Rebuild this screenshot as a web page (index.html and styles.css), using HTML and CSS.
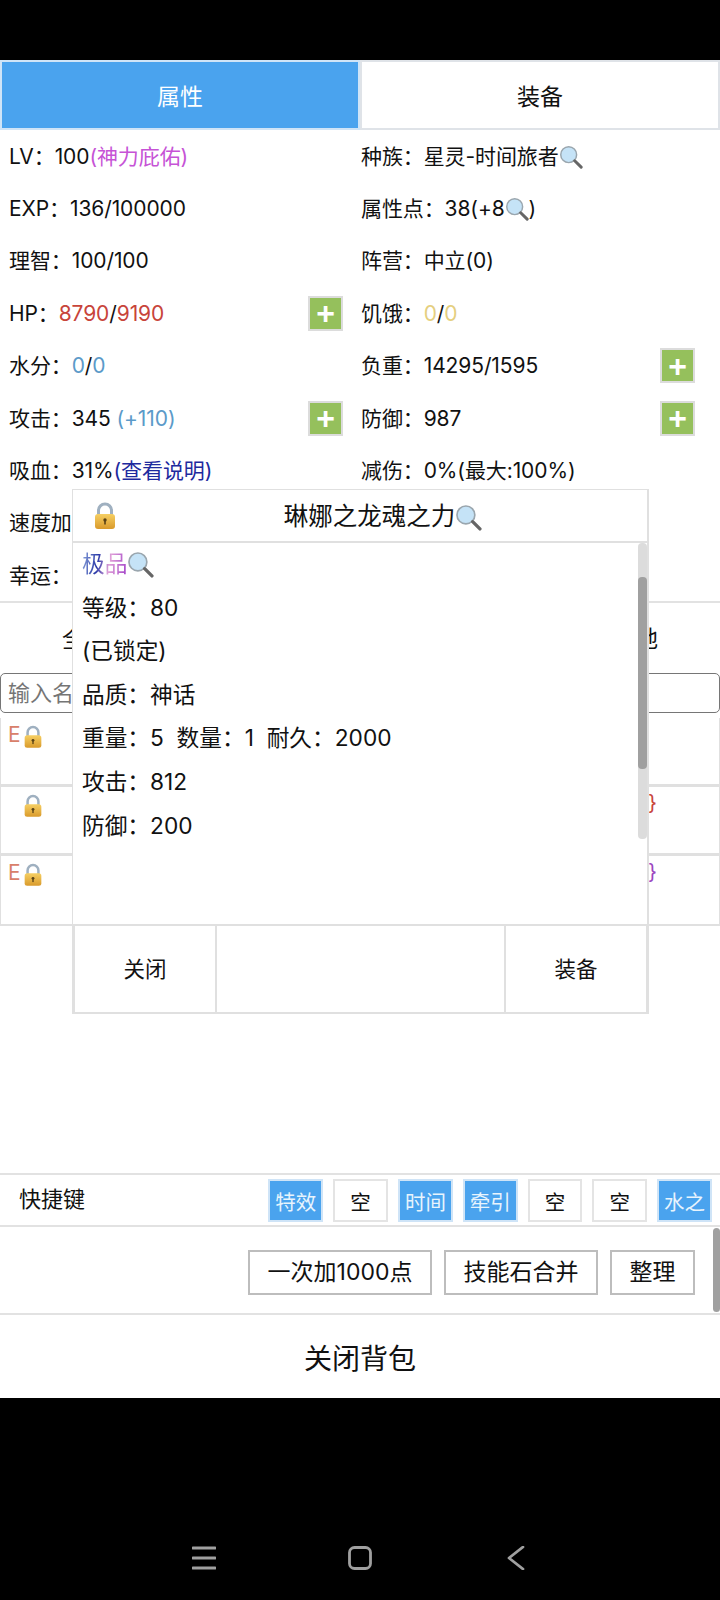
FILE: index.html
```html
<!DOCTYPE html>
<html lang="zh-CN">
<head>
    <meta charset="UTF-8">
    <meta name="viewport" content="width=device-width, initial-scale=1.0">
    <title>背包</title>
    <link rel="stylesheet" href="styles.css">
</head>
<body>

<svg class="defs" width="0" height="0" aria-hidden="true">
    <defs>
        <linearGradient id="gold" x1="0" y1="0" x2="0" y2="1">
            <stop offset="0" stop-color="#f6cf63"/>
            <stop offset="1" stop-color="#d99a2b"/>
        </linearGradient>
        <symbol id="lock" viewBox="0 0 24 28">
            <path d="M5.5 13V8.5a6.5 6.5 0 0 1 13 0V13" fill="none" stroke="#9fb0c0" stroke-width="3"/>
            <rect x="2" y="12" width="20" height="15" rx="3" fill="url(#gold)"/>
            <circle cx="12" cy="18" r="1.7" fill="#5b4316"/>
            <rect x="11.2" y="18" width="1.6" height="4.5" fill="#5b4316"/>
        </symbol>
        <symbol id="glass" viewBox="0 0 26 26">
            <circle cx="10.5" cy="10.5" r="8.6" fill="#c5e3f7" stroke="#9aa6ae" stroke-width="1.6"/>
            <path d="M17 17l7 7" stroke="#666" stroke-width="3.2" stroke-linecap="round"/>
        </symbol>
    </defs>
</svg>

<div class="page">
    <div class="top-bar"></div>

    <main class="panel">
        <div class="tabs">
            <div class="tab tab-active">属性</div>
            <div class="tab">装备</div>
        </div>

        <div class="stats">
            <div class="stat"><span>LV：100<span class="purple">(神力庇佑)</span></span></div>
            <div class="stat stat-right"><span>种族：星灵-时间旅者<svg class="icon-glass"><use href="#glass"/></svg></span></div>
            <div class="stat"><span>EXP：136/100000</span></div>
            <div class="stat stat-right"><span>属性点：38(+8<svg class="icon-glass"><use href="#glass"/></svg>)</span></div>
            <div class="stat"><span>理智：100/100</span></div>
            <div class="stat stat-right"><span>阵营：中立(0)</span></div>
            <div class="stat"><span>HP：<span class="red">8790</span>/<span class="red">9190</span></span><button class="plus">+</button></div>
            <div class="stat stat-right"><span>饥饿：<span class="yellow">0</span>/<span class="yellow">0</span></span></div>
            <div class="stat"><span>水分：<span class="steel">0</span>/<span class="steel">0</span></span></div>
            <div class="stat stat-right"><span>负重：14295/1595</span><button class="plus">+</button></div>
            <div class="stat"><span>攻击：345 <span class="steel">(+110)</span></span><button class="plus">+</button></div>
            <div class="stat stat-right"><span>防御：987</span><button class="plus">+</button></div>
            <div class="stat"><span>吸血：31%<span class="navy">(查看说明)</span></span></div>
            <div class="stat stat-right"><span>减伤：0%(最大:100%)</span></div>
            <div class="stat"><span>速度加成：0</span></div>
            <div class="stat stat-right"></div>
            <div class="stat"><span>幸运：0</span></div>
            <div class="stat stat-right"></div>
        </div>

        <div class="filters">
            <div class="filter">全部</div>
            <div class="filter">武器</div>
            <div class="filter">防具</div>
            <div class="filter">土地</div>
        </div>

        <input class="search" type="text" placeholder="输入名称搜索">

        <div class="items">
            <div class="item"><span class="grade">E</span><svg class="icon-lock"><use href="#lock"/></svg></div>
            <div class="item"><span class="grade"></span><svg class="icon-lock"><use href="#lock"/></svg><span class="item-name red">{+5}</span></div>
            <div class="item"><span class="grade">E</span><svg class="icon-lock"><use href="#lock"/></svg><span class="item-name violet">{+12}</span></div>
        </div>

        <div class="spacer"></div>

        <div class="shortcuts">
            <div class="shortcuts-label">快捷键</div>
            <div class="slot slot-on">特效</div>
            <div class="slot">空</div>
            <div class="slot slot-on">时间</div>
            <div class="slot slot-on">牵引</div>
            <div class="slot">空</div>
            <div class="slot">空</div>
            <div class="slot slot-on">水之</div>
        </div>

        <div class="actions">
            <button class="action">一次加1000点</button>
            <button class="action">技能石合并</button>
            <button class="action">整理</button>
            <div class="actions-thumb"></div>
        </div>

        <div class="close-bag">关闭背包</div>
    </main>

    <div class="modal">
        <div class="modal-head">
            <svg class="modal-lock"><use href="#lock"/></svg>
            <span>琳娜之龙魂之力<svg class="icon-glass icon-glass-lg"><use href="#glass"/></svg></span>
        </div>
        <div class="modal-body">
            <p><span class="rainbow">极品</span><svg class="icon-glass icon-glass-lg"><use href="#glass"/></svg></p>
            <p>等级：80</p>
            <p>(已锁定)</p>
            <p>品质：神话</p>
            <p>重量：5&nbsp;&nbsp;数量：1&nbsp;&nbsp;耐久：2000</p>
            <p>攻击：812</p>
            <p>防御：200</p>
            <div class="scroll-track"><div class="scroll-thumb"></div></div>
        </div>
        <div class="modal-foot">
            <div class="modal-btn modal-btn-side">关闭</div>
            <div class="modal-btn modal-btn-mid"></div>
            <div class="modal-btn modal-btn-side modal-btn-last">装备</div>
        </div>
    </div>

    <footer class="nav">
        <svg class="nav-icon" viewBox="0 0 24 24"><path d="M1 2h22M1 12h22M1 22h22" stroke="#a0a0a0" stroke-width="3" stroke-linecap="round" fill="none"/></svg>
        <svg class="nav-icon" viewBox="0 0 24 24"><rect x="1.5" y="1.5" width="21" height="21" rx="5" stroke="#a0a0a0" stroke-width="2.8" fill="none"/></svg>
        <svg class="nav-icon" viewBox="0 0 24 24"><path d="M19 1L5 12l14 11" stroke="#a0a0a0" stroke-width="2.8" stroke-linecap="round" stroke-linejoin="round" fill="none"/></svg>
    </footer>
</div>

</body>
</html>
```

FILE: styles.css
```css
* {
    box-sizing: border-box;
}
body {
    margin: 0;
    background-color: #000;
    font-family: Inter, "Noto Sans CJK SC", sans-serif;
    color: #111;
}
.defs {
    display: block;
    height: 0;
}
.page {
    position: relative;
    width: 720px;
    height: 1600px;
    display: flex;
    flex-direction: column;
    background-color: #000;
}
.top-bar {
    height: 60px;
}
.panel {
    height: 1338px;
    display: flex;
    flex-direction: column;
    background-color: #fff;
}

/* tabs */
.tabs {
    display: flex;
    height: 70px;
}
.tab {
    width: 50%;
    display: flex;
    align-items: center;
    justify-content: center;
    font-size: 23px;
    border: 2px solid #dfe3e8;
}
.tab-active {
    background-color: #4aa3ee;
    color: #fff;
    border-color: #cfe4f7;
}

/* stat grid */
.stats {
    display: grid;
    grid-template-columns: 1fr 1fr;
    grid-auto-rows: 52.4px;
    height: 473px;
    border-bottom: 2px solid #e2e2e2;
}
.stat {
    display: flex;
    align-items: center;
    justify-content: space-between;
    padding: 0 17px 0 9px;
    font-size: 21px;
    letter-spacing: -0.1px;
    white-space: nowrap;
}
.stat > span {
    margin-bottom: 3px;
}
.stat-right {
    padding: 0 25px 0 1px;
}
.plus {
    width: 35px;
    height: 35px;
    padding: 0;
    border: 2px solid #dcdcdc;
    background-color: #95c05c;
    color: #fff;
    font-family: "Liberation Sans", sans-serif;
    font-size: 32px;
    line-height: 30px;
    font-weight: bold;
}
.icon-glass {
    width: 24px;
    height: 24px;
    vertical-align: -5px;
}
.icon-glass-lg {
    width: 27px;
    height: 27px;
    vertical-align: -6px;
}
.purple { color: #c653d6; }
.red { color: #c8443a; }
.yellow { color: #e5cf7f; }
.steel { color: #5b9ac9; }
.navy { color: #1e2a9e; }
.violet { color: #9b45c0; }

/* filter row */
.filters {
    display: grid;
    grid-template-columns: repeat(4, 170px);
    justify-content: space-between;
    height: 70px;
    padding-bottom: 2px;
    align-items: center;
}
.filter {
    text-align: center;
    font-size: 23px;
}
.search {
    display: block;
    flex: none;
    width: 720px;
    height: 40px;
    padding: 0 7px;
    border: 1.5px solid #767676;
    border-radius: 5px;
    font-family: inherit;
    font-size: 22px;
}
.search::placeholder {
    color: #757575;
}

/* item list */
.items {
    margin-top: 5px;
    border: 1px solid #e0e0e0;
    border-top: none;
}
.item {
    display: flex;
    align-items: flex-start;
    height: 69px;
    padding: 4px 0 0 7px;
    border-bottom: 3px solid #e0e0e0;
    font-size: 21px;
}
.item:last-child {
    border-bottom-width: 1px;
}
.grade {
    width: 15px;
    color: #d8806a;
}
.icon-lock {
    width: 20px;
    height: 24px;
    margin-top: 3px;
}
.item-name {
    margin-left: auto;
    padding-right: 62px;
}
.spacer {
    flex: 1;
}

/* shortcut bar */
.shortcuts {
    display: flex;
    align-items: center;
    gap: 10px;
    height: 54px;
    padding: 1px 8px 0 19px;
    border-top: 2px solid #e2e2e2;
    border-bottom: 2px solid #e2e2e2;
}
.shortcuts-label {
    margin-right: auto;
    margin-top: -8px;
    font-size: 22px;
}
.slot {
    width: 54.8px;
    height: 43px;
    display: flex;
    align-items: center;
    justify-content: center;
    border: 2px solid #e4e4e4;
    font-size: 20.5px;
}
.slot-on {
    background-color: #4aa3ee;
    color: #e8f4fd;
    border-color: #cfe4f7;
}

/* action bar */
.actions {
    position: relative;
    display: flex;
    justify-content: flex-end;
    align-items: center;
    gap: 12px;
    height: 88px;
    padding: 4px 25px 0 0;
    border-bottom: 2px solid #e2e2e2;
}
.action {
    height: 45px;
    padding: 0 17.5px;
    border: 2px solid #bdbdbd;
    background-color: #fff;
    color: #111;
    font-family: inherit;
    font-size: 23px;
    line-height: 1;
    white-space: nowrap;
}
.actions-thumb {
    position: absolute;
    top: 1px;
    right: 0;
    width: 7px;
    height: 84px;
    border-radius: 4px;
    background-color: #a0a0a0;
}
.close-bag {
    height: 83px;
    flex: none;
    display: flex;
    align-items: center;
    justify-content: center;
    font-size: 28px;
}

/* item popup, sits over the list */
.modal {
    position: absolute;
    top: 489px;
    left: 72px;
    width: 577px;
    height: 525px;
    display: flex;
    flex-direction: column;
    background-color: #fff;
    border: 2px solid #e0e0e0;
    border-top-width: 1px;
    border-left-width: 1px;
}
.modal-head {
    position: relative;
    height: 53px;
    flex: none;
    display: flex;
    align-items: center;
    justify-content: center;
    padding: 0 0 3px 46px;
    font-size: 24.5px;
    border-bottom: 2px solid #e0e0e0;
}
.modal-lock {
    position: absolute;
    left: 20px;
    top: 12px;
    width: 24px;
    height: 28px;
}
.modal-body {
    position: relative;
    flex: 1;
    padding: 0 9px;
    font-size: 22.7px;
}
.modal-body p {
    margin: 0;
    height: 43.6px;
    line-height: 41px;
}
.rainbow {
    background: linear-gradient(100deg, #8fa8dc, #2a3aa8 35%, #e0a0d8 60%, #a040c8);
    -webkit-background-clip: text;
    background-clip: text;
    color: transparent;
}
.scroll-track {
    position: absolute;
    top: 0;
    right: 0;
    width: 9px;
    height: 296px;
    border-radius: 4px;
    background-color: #dcdcdc;
}
.scroll-thumb {
    margin-top: 34px;
    height: 192px;
    border-radius: 4px;
    background-color: #a0a0a0;
}
.modal-foot {
    height: 88px;
    flex: none;
    display: flex;
    border-top: 2px solid #e0e0e0;
}
.modal-btn {
    display: flex;
    align-items: center;
    justify-content: center;
    padding-bottom: 3px;
    font-size: 21.5px;
}
.modal-btn-side {
    width: 142px;
    border-left: 2px solid #e0e0e0;
}
.modal-btn-last {
    width: 143px;
    border-right: 1px solid #e0e0e0;
}
.modal-btn-mid {
    flex: 1;
    border-left: 2px solid #e0e0e0;
}

/* phone nav */
.nav {
    flex: 1;
    display: flex;
    align-items: flex-end;
    justify-content: center;
    gap: 132px;
    padding-bottom: 30px;
}
.nav-icon {
    width: 24px;
    height: 24px;
}
```
